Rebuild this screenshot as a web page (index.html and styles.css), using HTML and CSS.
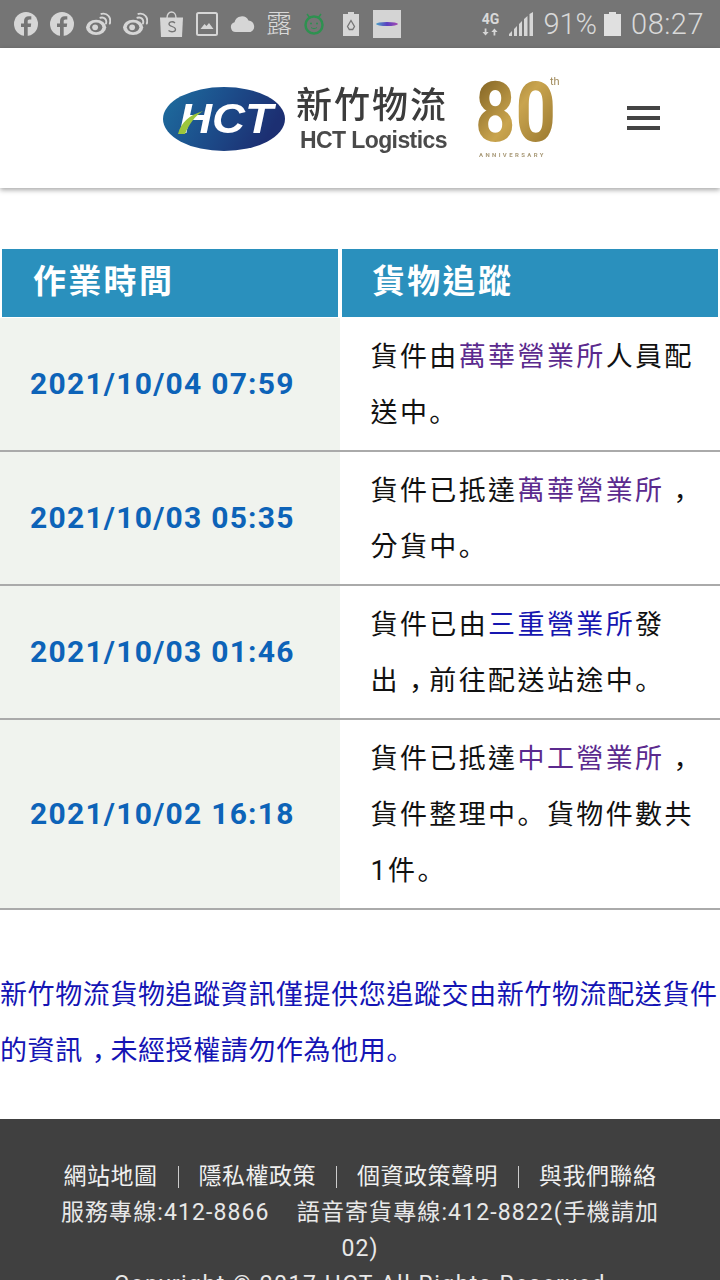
FILE: index.html
```html
<!DOCTYPE html>
<html lang="zh-Hant">
<head>
    <meta charset="UTF-8">
    <meta name="viewport" content="width=device-width, initial-scale=1.0">
    <title>貨物追蹤</title>
    <link rel="stylesheet" href="styles.css">
</head>
<body>
    <div class="statusbar">
        <div class="status-left">
            <svg class="ic-fb" viewBox="0 0 24 24"><circle cx="12" cy="12" r="12" fill="#d6d6d6"/><path d="M10 24v-9H7v-3.600h3V9c0-3.200 1.900-4.800 4.700-4.800 1.300 0 2.300.1 2.600.1v3.100h-1.800c-1.500 0-1.800.7-1.800 1.800v2.200h3.500l-.5 3.600h-3V24z" fill="#757575"/></svg>
            <svg class="ic-fb" viewBox="0 0 24 24"><circle cx="12" cy="12" r="12" fill="#d6d6d6"/><path d="M10 24v-9H7v-3.600h3V9c0-3.200 1.900-4.800 4.700-4.800 1.300 0 2.300.1 2.600.1v3.100h-1.800c-1.500 0-1.800.7-1.800 1.800v2.200h3.500l-.5 3.600h-3V24z" fill="#757575"/></svg>
            <svg class="ic-weibo" viewBox="0 0 26 24"><ellipse cx="10.500" cy="15.500" rx="10.500" ry="8" fill="#d6d6d6"/><ellipse cx="10.500" cy="15.500" rx="6.500" ry="5" fill="#757575"/><circle cx="9.500" cy="15.500" r="3" fill="#d6d6d6"/><path d="M15 5.500c4-1.200 7 2 5.800 6M16 1.500c6.500-1.500 10.500 4 8.800 10" fill="none" stroke="#d6d6d6" stroke-width="2" stroke-linecap="round"/></svg>
            <svg class="ic-weibo" viewBox="0 0 26 24"><ellipse cx="10.500" cy="15.500" rx="10.500" ry="8" fill="#d6d6d6"/><ellipse cx="10.500" cy="15.500" rx="6.500" ry="5" fill="#757575"/><circle cx="9.500" cy="15.500" r="3" fill="#d6d6d6"/><path d="M15 5.500c4-1.200 7 2 5.800 6M16 1.500c6.500-1.500 10.500 4 8.800 10" fill="none" stroke="#d6d6d6" stroke-width="2" stroke-linecap="round"/></svg>
            <svg class="ic-shop" viewBox="0 0 23 26"><path d="M7 7c0-8 9-8 9 0" fill="none" stroke="#d6d6d6" stroke-width="1.400"/><path d="M0 6.500h23l-1 19.500H1z" fill="#d6d6d6"/><path d="M15 12c-2-2-6-1.500-6 1 0 3 6.500 2 6.500 5.500 0 2.500-4.500 3-7 1" fill="none" stroke="#757575" stroke-width="1.300"/></svg>
            <svg class="ic-img" viewBox="0 0 22 24"><rect x="1" y="1" width="20" height="22" rx="1.500" fill="none" stroke="#d6d6d6" stroke-width="2"/><path d="M4.500 17l4-5 2 2 2.500-3 4.500 6z" fill="#d6d6d6"/></svg>
            <svg class="ic-cloud" viewBox="0 0 26 16"><path d="M6 16a5 5 0 0 1-1.500-9.800A7.500 7.500 0 0 1 18.500 4.500 6 6 0 0 1 20.500 16z" fill="#d6d6d6"/></svg>
            <span class="status-lu">露</span>
            <svg class="ic-green" viewBox="0 0 20 24"><circle cx="10" cy="13" r="8.500" fill="none" stroke="#2e9150" stroke-width="2.500"/><path d="M3 2l3 4M17 2l-3 4" stroke="#2e9150" stroke-width="1.500"/><circle cx="7" cy="11.500" r="1" fill="#2e9150"/><circle cx="13" cy="11.500" r="1" fill="#2e9150"/><path d="M7 15.500c2 1.500 4 1.500 6 0" fill="none" stroke="#2e9150" stroke-width="1"/></svg>
            <svg class="ic-recycle" viewBox="0 0 16 24"><path d="M5 0h6v2h5v22H0V2h5z" fill="#d6d6d6"/><path d="M8 8.500l3.500 6-1.800 3H6.300l-1.800-3z" fill="none" stroke="#757575" stroke-width="1.300"/></svg>
            <div class="status-thumb"><span class="thumb-wave"></span></div>
        </div>
        <div class="status-right">
            <div class="net"><span class="net-4g">4G</span><svg class="net-arrows" viewBox="0 0 18 8"><path d="M5 0v4h2.500L4 8 .5 4H3V0zM13 8V4h-2.500L14 0l3.500 4H15v4z" fill="#d6d6d6"/></svg></div>
            <svg class="ic-signal" viewBox="0 0 24 24"><path d="M0 24v-2l3-3v5zM5 24v-7l3-3v10zM10 24V12l3-3v15zM15 24V7l3.500-3v20zM20.500 24V2L24 0v24z" fill="#d6d6d6"/></svg>
            <span class="status-pct">91%</span>
            <svg class="ic-batt" viewBox="0 0 17 24"><path d="M5 0h7v2h5v22H0V2h5z" fill="#e0e0e0"/></svg>
            <span class="status-time">08:27</span>
        </div>
    </div>

    <header class="site-header">
        <div class="logo">
            <svg class="logo-oval" viewBox="0 0 122 66">
                <defs>
                    <linearGradient id="ovalFill" x1="0" y1="0" x2="1" y2="0.3">
                        <stop offset="0" stop-color="#1e6f9f"/>
                        <stop offset="0.5" stop-color="#1c4f8c"/>
                        <stop offset="1" stop-color="#1c2f72"/>
                    </linearGradient>
                </defs>
                <ellipse cx="61" cy="34" rx="61" ry="32" fill="url(#ovalFill)"/>
                <text x="16" y="48" class="oval-text" textLength="94" lengthAdjust="spacingAndGlyphs">HCT</text>
                <path d="M15 49c3-12 12-19 25-23-8 5-14 13-18 23z" fill="#9cc63c"/>
            </svg>
            <div class="logo-name">
                <span class="logo-cn">新竹物流</span>
                <span class="logo-en">HCT Logistics</span>
            </div>
            <div class="logo-80">
                <svg class="eighty" viewBox="0 0 86 84">
                    <defs>
                        <linearGradient id="goldFill" x1="0" y1="0" x2="1" y2="1">
                            <stop offset="0" stop-color="#6f5218"/>
                            <stop offset="0.5" stop-color="#c9a44e"/>
                            <stop offset="1" stop-color="#8c6c28"/>
                        </linearGradient>
                    </defs>
                    <text x="-3" y="65" class="eighty-num" fill="url(#goldFill)" textLength="81" lengthAdjust="spacingAndGlyphs">80</text>
                    <text x="72" y="9" class="eighty-th">th</text>
                    <text x="1" y="81" class="eighty-sub">ANNIVERSARY</text>
                </svg>
            </div>
        </div>
        <div class="hamburger"><span></span><span></span><span></span></div>
    </header>

    <main class="content">
        <table class="track">
            <thead>
                <tr><th>作業時間</th><th>貨物追蹤</th></tr>
            </thead>
            <tbody>
                <tr>
                    <td class="time">2021/10/04 07:59</td>
                    <td>貨件由<a class="visited" href="#">萬華營業所</a>人員配送中<span class="stop" lang="zh-Hans">。</span></td>
                </tr>
                <tr>
                    <td class="time">2021/10/03 05:35</td>
                    <td>貨件已抵達<a class="visited" href="#">萬華營業所</a><span class="comma" lang="zh-Hans">，</span>分貨中<span class="stop" lang="zh-Hans">。</span></td>
                </tr>
                <tr>
                    <td class="time">2021/10/03 01:46</td>
                    <td>貨件已由<a href="#">三重營業所</a>發出<span class="comma" lang="zh-Hans">，</span>前往配送站途中<span class="stop" lang="zh-Hans">。</span></td>
                </tr>
                <tr>
                    <td class="time">2021/10/02 16:18</td>
                    <td>貨件已抵達<a class="visited" href="#">中工營業所</a><span class="comma" lang="zh-Hans">，</span>貨件整理中<span class="stop" lang="zh-Hans">。</span>貨物件數共1件<span class="stop" lang="zh-Hans">。</span></td>
                </tr>
            </tbody>
        </table>
        <p class="notice">新竹物流貨物追蹤資訊僅提供您追蹤交由新竹物流配送貨件的資訊<span class="comma" lang="zh-Hans">，</span>未經授權請勿作為他用<span class="stop" lang="zh-Hans">。</span></p>
    </main>

    <footer class="site-footer">
        <div class="foot-links">
            <a href="#">網站地圖</a><i></i><a href="#">隱私權政策</a><i></i><a href="#">個資政策聲明</a><i></i><a href="#">與我們聯絡</a>
        </div>
        <div class="foot-phone">服務專線:412-8866 &nbsp; &nbsp;語音寄貨專線:412-8822(手機請加02)</div>
        <div class="foot-copy">Copyright © 2017 HCT All Rights Reserved</div>
    </footer>
</body>
</html>
```

FILE: styles.css
```css
* {
    box-sizing: border-box;
}
html, body {
    height: 1280px;
    overflow: hidden;
}
body {
    margin: 0;
    background: #fff;
    font-family: Roboto, "Noto Sans CJK TC", sans-serif;
    color: #222;
}
.statusbar {
    height: 48px;
    background: #757575;
    display: flex;
    justify-content: space-between;
    align-items: center;
    padding: 0 16px 0 14px;
    color: #d9d9d9;
}
.status-left, .status-right {
    display: flex;
    align-items: center;
}
.ic-fb { width: 24px; height: 24px; margin-right: 12px; }
.ic-weibo { width: 25px; height: 24px; margin-right: 12px; }
.ic-shop { width: 23px; height: 26px; margin-right: 13px; }
.ic-img { width: 22px; height: 24px; margin-right: 12px; }
.ic-cloud { width: 26px; height: 16px; margin-right: 10px; }
.status-lu { width: 26px; font-size: 26px; line-height: 30px; margin-right: 12px; font-weight: 300; }
.ic-green { width: 20px; height: 24px; margin-right: 19px; }
.ic-recycle { width: 16px; height: 24px; margin-right: 14px; }
.status-thumb {
    width: 28px;
    height: 28px;
    background: #d4d4d4;
    display: flex;
    align-items: center;
    justify-content: center;
}
.thumb-wave {
    width: 22px;
    height: 4px;
    border-radius: 50%;
    background: linear-gradient(90deg, #4aa3c7, #5b3fc0, #a64bb0);
}
.net {
    width: 20px;
    margin-right: 9px;
    display: flex;
    flex-direction: column;
    align-items: center;
}
.net-4g { font-size: 14px; line-height: 14px; font-weight: 700; }
.net-arrows { width: 16px; height: 8px; margin-top: 2px; }
.ic-signal { width: 24px; height: 24px; margin-right: 10px; }
.status-pct { font-size: 29px; font-weight: 300; margin-right: 7px; line-height: 32px; }
.ic-batt { width: 17px; height: 24px; margin-right: 10px; }
.status-time { font-size: 29px; font-weight: 300; line-height: 32px; letter-spacing: 0.5px; }

.site-header {
    height: 140px;
    background: #fff;
    box-shadow: 0 2px 5px rgba(0, 0, 0, 0.35);
    display: flex;
    align-items: center;
    padding: 0 60px 0 163px;
    justify-content: space-between;
    position: relative;
}
.logo {
    display: flex;
    align-items: center;
    filter: blur(0.5px);
}
.logo-oval { width: 122px; height: 66px; margin-right: 11px; }
.oval-text {
    font: italic 700 42px "Liberation Sans", sans-serif;
    fill: #fff;
}
.logo-name {
    display: flex;
    flex-direction: column;
    width: 152px;
    padding-top: 4px;
    color: #3c3c3c;
}
.logo-cn { font-size: 36px; line-height: 40px; letter-spacing: 2px; font-weight: 500; white-space: nowrap; }
.logo-en { font-size: 23px; line-height: 28px; font-weight: 700; color: #4a4a4a; font-family: "Liberation Sans", sans-serif; white-space: nowrap; padding-left: 4px; letter-spacing: -0.6px; }
.logo-80 { margin-left: 30px; }
.eighty { width: 86px; height: 84px; display: block; overflow: visible; }
.eighty-num { font: 700 84px Roboto, sans-serif; }
.eighty-th { font: 400 11px Roboto, sans-serif; fill: #a08a5a; }
.eighty-sub { font: 700 6px Roboto, sans-serif; fill: #a99a78; letter-spacing: 2.400px; }
.hamburger {
    width: 33px;
    display: flex;
    flex-direction: column;
    gap: 6px;
}
.hamburger span {
    height: 4px;
    background: #444;
}

.content {
    padding-top: 60px;
}
.track {
    width: 720px;
    table-layout: fixed;
    border-collapse: separate;
    border-spacing: 0;
}
.track th {
    height: 70px;
    background: #2a90bd;
    background-clip: padding-box;
    border: solid transparent;
    border-width: 1px 2px 1px 2px;
    color: #fff;
    font-size: 33px;
    font-weight: 700;
    text-align: left;
    padding: 0 0 8px 30px;
    letter-spacing: 2.300px;
}
.track th:first-child {
    width: 340px;
    padding-left: 31px;
}
.track td {
    padding: 11px 16px 9px 30.5px;
    border-bottom: 2px solid #aaa;
    font-size: 27px;
    line-height: 56px;
    letter-spacing: 2.400px;
    font-weight: 400;
    color: #111;
}
.track td.time {
    background: #f0f3ee;
    padding: 10px 0 10px 30px;
    color: #0d63b8;
    font-size: 30px;
    font-weight: 700;
    letter-spacing: 1.250px;
}
.track a {
    color: #1616b0;
    text-decoration: none;
}
.track a.visited {
    color: #5b2a8e;
}
.stop {
    font-family: "Noto Sans CJK SC", sans-serif;
    line-height: 0;
}
.comma {
    font-family: "Noto Sans CJK SC", sans-serif;
    line-height: 0;
    padding-left: 9px;
    margin-right: -9px;
}
.notice {
    margin: 57px 0 40px;
    font-size: 27px;
    line-height: 56px;
    letter-spacing: 0.600px;
    color: #1414b4;
}

.site-footer {
    background: #404040;
    padding: 40px 58px 0;
    font-size: 23px;
    line-height: 36px;
    color: #e8e8e8;
    text-align: center;
    letter-spacing: 0.500px;
}
.foot-links {
    display: flex;
    justify-content: center;
    align-items: center;
}
.foot-links a {
    color: #f0f0f0;
    text-decoration: none;
}
.foot-links i {
    width: 1px;
    height: 22px;
    background: #ccc;
    margin: 0 20px;
}
.foot-phone {
    letter-spacing: 1.100px;
}
.foot-copy {
    letter-spacing: 1.500px;
    white-space: nowrap;
}
```
